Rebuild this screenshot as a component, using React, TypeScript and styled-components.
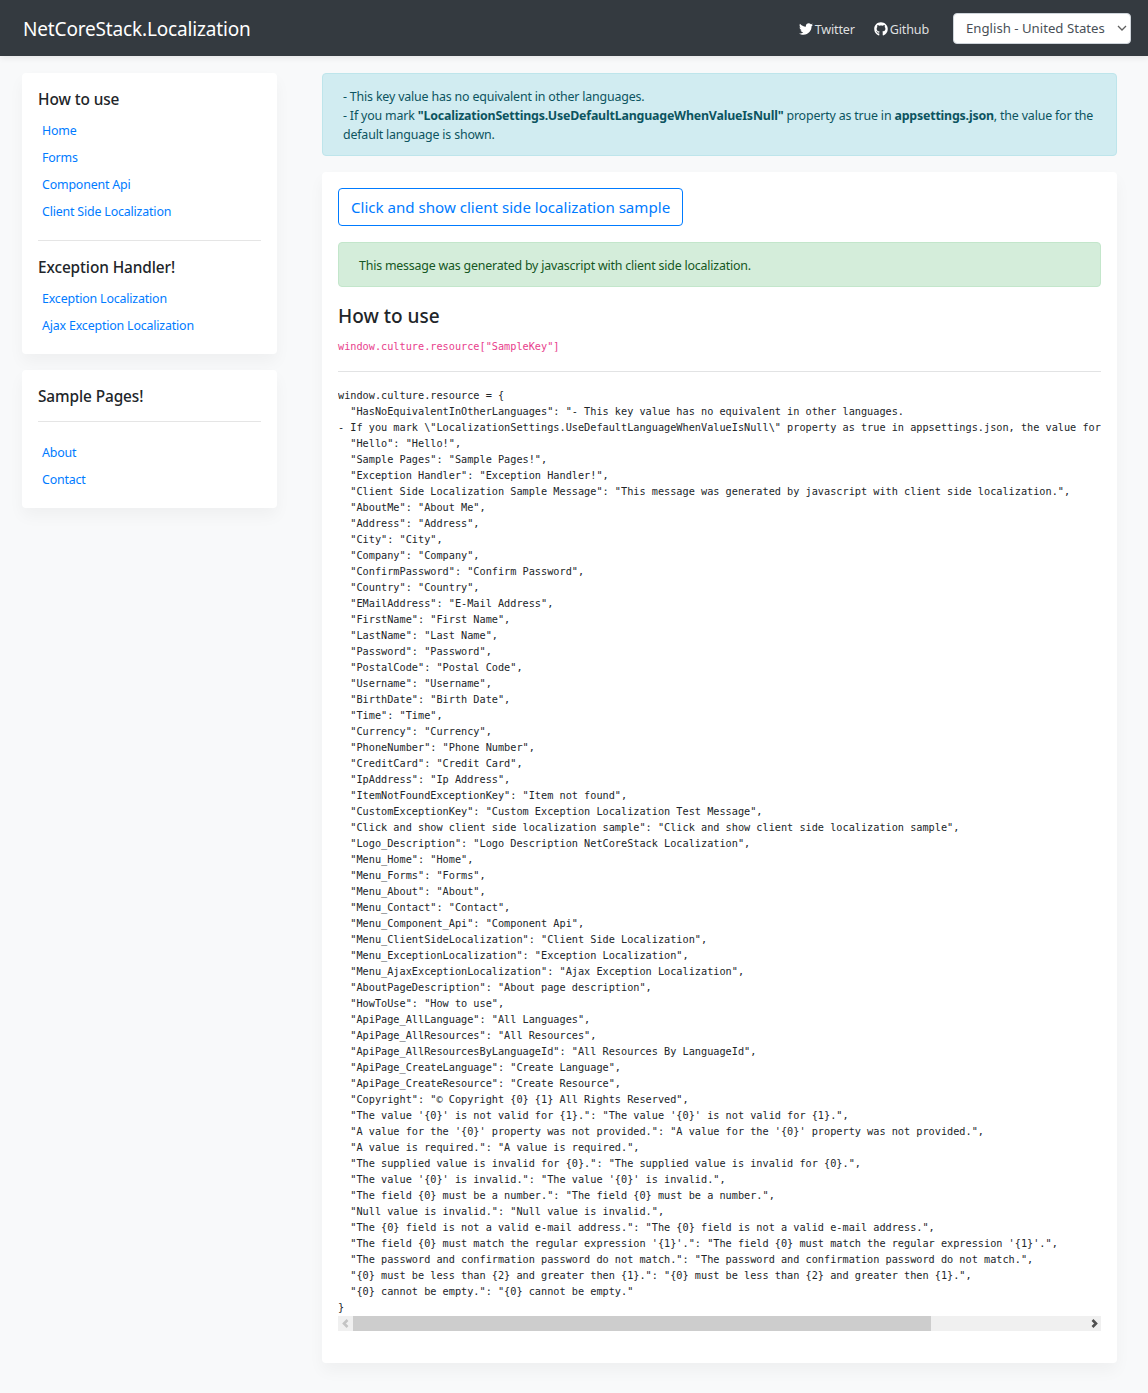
import React, { memo } from 'react'
import styled, { createGlobalStyle } from 'styled-components'
import { FaTwitter, FaGithub } from 'react-icons/fa'

const uiFont = `"Noto Sans", "Open Sans", sans-serif`

const GlobalStyle = createGlobalStyle`
  * {
    box-sizing: border-box;
  }
  body {
    margin: 0;
    background: #f8f9fa;
    color: #212529;
    font-family: ${uiFont};
    font-size: 12.4px;
    line-height: 19px;
  }
`

const TopBar = styled.header`
  display: flex;
  align-items: center;
  height: 56px;
  padding: 0 17px 0 23px;
  background: #343a40;
  box-shadow: 0 2px 6px rgba(0, 0, 0, 0.08);
`

const Brand = styled.a`
  margin-right: auto;
  padding-top: 2px;
  color: #fff;
  font-size: 19px;
  letter-spacing: -0.16px;
`

const TopLink = styled.a`
  display: flex;
  align-items: center;
  gap: 2px;
  margin-right: 19px;
  padding-top: 2px;
  color: rgba(255, 255, 255, 0.85);
  font-size: 12.6px;
  letter-spacing: -0.17px;
  svg {
    width: 14px;
    height: 14px;
    color: #fff;
  }
`

const LangSelect = styled.select`
  width: 178px;
  height: 31px;
  margin-left: 5px;
  padding: 0 0 0 12px;
  border: 1px solid #ced4da;
  border-radius: 4px;
  appearance: none;
  background: #fff url("data:image/svg+xml,%3Csvg xmlns='http://www.w3.org/2000/svg' width='10' height='6'%3E%3Cpath d='M1 1l4 4 4-4' fill='none' stroke='%23606060' stroke-width='1.3'/%3E%3C/svg%3E") no-repeat right 3px center;
  color: #495057;
  font-family: ${uiFont};
  font-size: 13.2px;
`

const Layout = styled.div`
  display: grid;
  grid-template-columns: 255px 795px;
  column-gap: 45px;
  padding: 17px 0 30px 22px;
`

const Side = styled.aside`
  display: flex;
  flex-direction: column;
  gap: 16px;
`

const Card = styled.div`
  background: #fff;
  border-radius: 4px;
  box-shadow: 0 8px 16px rgba(0, 0, 0, 0.04);
`

const SideCard = styled(Card)`
  padding: 16px 16px 19px;
`

const SideTitle = styled.h5`
  margin: 0;
  font-size: 15.4px;
  font-weight: 500;
  line-height: 21px;
  letter-spacing: -0.1px;
`

const SideNav = styled.nav`
  display: flex;
  flex-direction: column;
  gap: 8px;
  margin-top: 11px;
  padding-left: 4px;
`

const SideLink = styled.a`
  color: #007bff;
  letter-spacing: -0.17px;
`

const Rule = styled.hr<{ $top: number; $bottom: number }>`
  margin: ${(props) => props.$top}px 0 ${(props) => props.$bottom}px;
  border: 0;
  border-top: 1px solid #e5e5e5;
`

const Main = styled.main`
  display: flex;
  flex-direction: column;
  gap: 16px;
  min-width: 0;
`

const InfoAlert = styled.div`
  padding: 13px 20px 11px;
  background: #d1ecf1;
  border: 1px solid #bee5eb;
  border-radius: 4px;
  color: #0c5460;
  letter-spacing: -0.17px;
  b {
    letter-spacing: -0.19px;
  }
`

const Panel = styled(Card)`
  padding: 16px;
`

const OutlineButton = styled.button`
  display: block;
  height: 38px;
  padding: 0 12px;
  background: #fff;
  border: 1px solid #007bff;
  border-radius: 4px;
  color: #007bff;
  font-family: ${uiFont};
  font-size: 15.1px;
`

const SuccessAlert = styled.div`
  margin-top: 16px;
  padding: 13px 20px 11px;
  background: #d4edda;
  border: 1px solid #c3e6cb;
  border-radius: 4px;
  color: #155724;
  letter-spacing: -0.2px;
`

const SubTitle = styled.h4`
  margin: 16px 0 10px;
  font-size: 19px;
  font-weight: 500;
  line-height: 26px;
`

const InlineCode = styled.code`
  display: block;
  color: #e83e8c;
  font-family: "DejaVu Sans Mono", monospace;
  font-size: 10.22px;
  line-height: 16px;
`

const CodeRule = styled.hr`
  margin: 16px 0;
  border: 0;
  border-top: 1px solid #e2e3e4;
`

const CodeBlock = styled.pre`
  margin: 0;
  overflow: hidden;
  color: #212529;
  font-family: "DejaVu Sans Mono", monospace;
  font-size: 10.22px;
  line-height: 16px;
`

const ScrollBar = styled.div`
  display: flex;
  height: 15px;
  margin-bottom: 16px;
  background: #f0f0f0;
`

const ScrollArrow = styled.span<{ $color: string }>`
  display: flex;
  align-items: center;
  justify-content: center;
  flex: none;
  width: 15px;
  color: ${(props) => props.$color};
  svg {
    width: 8px;
    height: 9px;
  }
`

const ScrollThumb = styled.div`
  flex: none;
  width: 578px;
  background: #cdcdcd;
`

const ScrollRest = styled.div`
  flex: 1;
`

const resourceText = `window.culture.resource = {
  "HasNoEquivalentInOtherLanguages": "- This key value has no equivalent in other languages.
- If you mark \\"LocalizationSettings.UseDefaultLanguageWhenValueIsNull\\" property as true in appsettings.json, the value for the default language is shown.",
  "Hello": "Hello!",
  "Sample Pages": "Sample Pages!",
  "Exception Handler": "Exception Handler!",
  "Client Side Localization Sample Message": "This message was generated by javascript with client side localization.",
  "AboutMe": "About Me",
  "Address": "Address",
  "City": "City",
  "Company": "Company",
  "ConfirmPassword": "Confirm Password",
  "Country": "Country",
  "EMailAddress": "E-Mail Address",
  "FirstName": "First Name",
  "LastName": "Last Name",
  "Password": "Password",
  "PostalCode": "Postal Code",
  "Username": "Username",
  "BirthDate": "Birth Date",
  "Time": "Time",
  "Currency": "Currency",
  "PhoneNumber": "Phone Number",
  "CreditCard": "Credit Card",
  "IpAddress": "Ip Address",
  "ItemNotFoundExceptionKey": "Item not found",
  "CustomExceptionKey": "Custom Exception Localization Test Message",
  "Click and show client side localization sample": "Click and show client side localization sample",
  "Logo_Description": "Logo Description NetCoreStack Localization",
  "Menu_Home": "Home",
  "Menu_Forms": "Forms",
  "Menu_About": "About",
  "Menu_Contact": "Contact",
  "Menu_Component_Api": "Component Api",
  "Menu_ClientSideLocalization": "Client Side Localization",
  "Menu_ExceptionLocalization": "Exception Localization",
  "Menu_AjaxExceptionLocalization": "Ajax Exception Localization",
  "AboutPageDescription": "About page description",
  "HowToUse": "How to use",
  "ApiPage_AllLanguage": "All Languages",
  "ApiPage_AllResources": "All Resources",
  "ApiPage_AllResourcesByLanguageId": "All Resources By LanguageId",
  "ApiPage_CreateLanguage": "Create Language",
  "ApiPage_CreateResource": "Create Resource",
  "Copyright": "© Copyright {0} {1} All Rights Reserved",
  "The value '{0}' is not valid for {1}.": "The value '{0}' is not valid for {1}.",
  "A value for the '{0}' property was not provided.": "A value for the '{0}' property was not provided.",
  "A value is required.": "A value is required.",
  "The supplied value is invalid for {0}.": "The supplied value is invalid for {0}.",
  "The value '{0}' is invalid.": "The value '{0}' is invalid.",
  "The field {0} must be a number.": "The field {0} must be a number.",
  "Null value is invalid.": "Null value is invalid.",
  "The {0} field is not a valid e-mail address.": "The {0} field is not a valid e-mail address.",
  "The field {0} must match the regular expression '{1}'.": "The field {0} must match the regular expression '{1}'.",
  "The password and confirmation password do not match.": "The password and confirmation password do not match.",
  "{0} must be less than {2} and greater then {1}.": "{0} must be less than {2} and greater then {1}.",
  "{0} cannot be empty.": "{0} cannot be empty."
}`

const App: React.FC = memo(() => {
  return (
    <>
      <GlobalStyle />
      <TopBar>
        <Brand>NetCoreStack.Localization</Brand>
        <TopLink><FaTwitter /> Twitter</TopLink>
        <TopLink><FaGithub /> Github</TopLink>
        <LangSelect defaultValue="en-US">
          <option value="en-US">English - United States</option>
        </LangSelect>
      </TopBar>
      <Layout>
        <Side>
          <SideCard>
            <SideTitle>How to use</SideTitle>
            <SideNav>
              <SideLink>Home</SideLink>
              <SideLink>Forms</SideLink>
              <SideLink>Component Api</SideLink>
              <SideLink>Client Side Localization</SideLink>
            </SideNav>
            <Rule $top={19} $bottom={16} />
            <SideTitle>Exception Handler!</SideTitle>
            <SideNav>
              <SideLink>Exception Localization</SideLink>
              <SideLink>Ajax Exception Localization</SideLink>
            </SideNav>
          </SideCard>
          <SideCard>
            <SideTitle>Sample Pages!</SideTitle>
            <Rule $top={14} $bottom={21} />
            <SideNav>
              <SideLink>About</SideLink>
              <SideLink>Contact</SideLink>
            </SideNav>
          </SideCard>
        </Side>
        <Main>
          <InfoAlert>
            - This key value has no equivalent in other languages.<br />
            - If you mark <b>"LocalizationSettings.UseDefaultLanguageWhenValueIsNull"</b> property as true in <b>appsettings.json</b>, the value for the default language is shown.
          </InfoAlert>
          <Panel>
            <OutlineButton>Click and show client side localization sample</OutlineButton>
            <SuccessAlert>This message was generated by javascript with client side localization.</SuccessAlert>
            <SubTitle>How to use</SubTitle>
            <InlineCode>window.culture.resource["SampleKey"]</InlineCode>
            <CodeRule />
            <CodeBlock>{resourceText}</CodeBlock>
            <ScrollBar>
              <ScrollArrow $color="#c4c4c4">
                <svg viewBox="0 0 8 9"><path d="M5.5 1 2 4.5 5.5 8" fill="none" stroke="currentColor" strokeWidth="2.6" /></svg>
              </ScrollArrow>
              <ScrollThumb />
              <ScrollRest />
              <ScrollArrow $color="#505050">
                <svg viewBox="0 0 8 9"><path d="M2.5 1 6 4.5 2.5 8" fill="none" stroke="currentColor" strokeWidth="2.6" /></svg>
              </ScrollArrow>
            </ScrollBar>
          </Panel>
        </Main>
      </Layout>
    </>
  )
})

export default App
